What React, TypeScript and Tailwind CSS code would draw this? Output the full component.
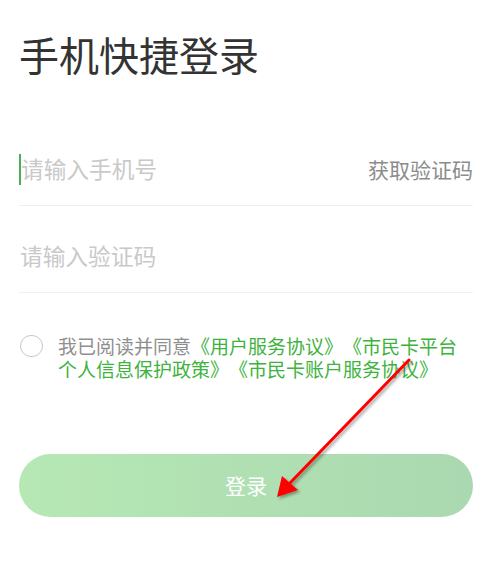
import React from "react";

const font = { fontFamily: '"Noto Sans CJK SC", "Noto Sans", sans-serif' };

export default function App() {
  return (
    <div className="relative w-[492px] h-[583px] bg-white overflow-hidden [text-spacing-trim:space-all]" style={font}>
      <div className="px-[19px] pt-[34px]">
        <h1 className="text-[40px] leading-[40px] text-[#333333] font-normal">手机快捷登录</h1>

        <div className="mt-[45px] flex items-center justify-between pt-[39px] pb-[25px] border-b border-[#f0f0f0]">
          <div className="flex items-center h-[22px]">
            <span className="w-[2px] h-[31px] bg-[#4caf50] shrink-0"></span>
            <span className="text-[22.7px] leading-[22px] text-[#c9c9c9]">请输入手机号</span>
          </div>
          <span className="text-[21px] leading-[22px] text-[#8c8c8c]">获取验证码</span>
        </div>

        <div className="flex items-center pt-[39px] pb-[25px] border-b border-[#f0f0f0]">
          <span className="text-[22.7px] leading-[22px] text-[#c9c9c9] pl-[1px]">请输入验证码</span>
        </div>

        <div className="mt-[41px] flex items-start">
          <span className="mt-[1px] ml-[1px] w-[23px] h-[22px] rounded-full border border-[#c8c8c8] shrink-0"></span>
          <p className="ml-[15px] text-[19px] leading-[23px] text-[#3db33d]">
            <span className="text-[#8f8f8f]">我已阅读并同意</span>《用户服务协议》《市民卡平台个人信息保护政策》《市民卡账户服务协议》
          </p>
        </div>

        <button className="mt-[74px] w-full h-[63px] rounded-full bg-gradient-to-r from-[#b6e8b4] to-[#aad8b0] text-white text-[21px] flex items-center justify-center">
          登录
        </button>
      </div>

      <svg className="absolute left-0 top-0 pointer-events-none" width="492" height="583" viewBox="0 0 492 583">
        <defs>
          <filter id="sh" x="-20%" y="-20%" width="140%" height="140%">
            <feDropShadow dx="2" dy="2" stdDeviation="1.5" floodColor="#000" floodOpacity="0.35" />
          </filter>
        </defs>
        <g filter="url(#sh)">
          <line x1="409" y1="360" x2="289" y2="484" stroke="#ff0000" strokeWidth="3" strokeLinecap="round" />
          <polygon points="277,497 282,476 298,490" fill="#ff0000" />
        </g>
      </svg>
    </div>
  );
}
